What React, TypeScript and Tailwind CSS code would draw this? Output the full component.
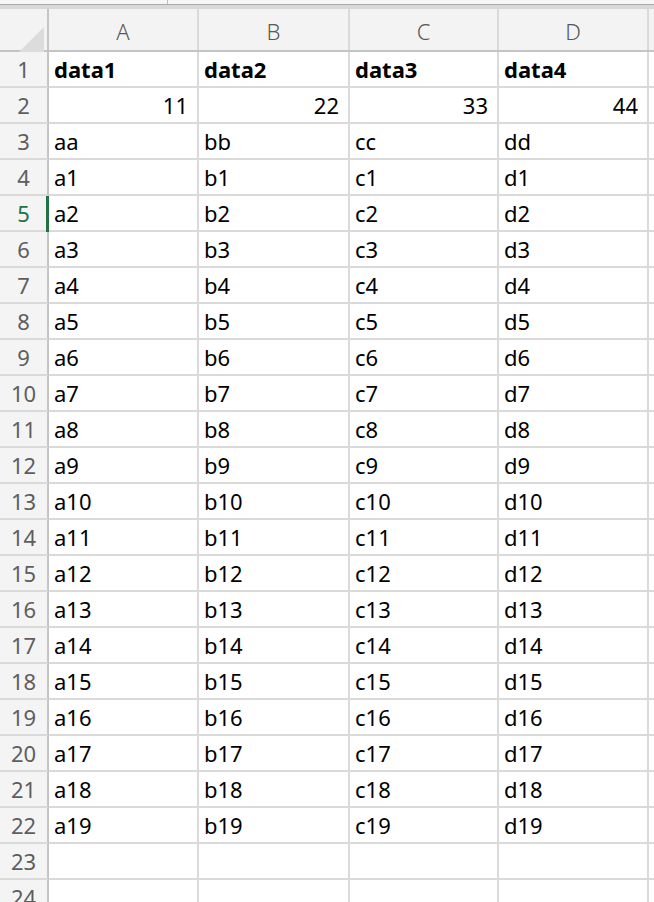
import React from 'react';

type Row = string[];

const columns = ['A', 'B', 'C', 'D'];

const rows: Row[] = [
  ['data1', 'data2', 'data3', 'data4'],
  ['11', '22', '33', '44'],
  ['aa', 'bb', 'cc', 'dd'],
  ...Array.from({ length: 19 }, (_, i) => [`a${i + 1}`, `b${i + 1}`, `c${i + 1}`, `d${i + 1}`]),
  ['', '', '', ''],
  ['', '', '', ''],
];

const font = { fontFamily: '"Noto Sans", "Open Sans", sans-serif' };

const Corner: React.FC = () => (
  <div className="h-full bg-[#f3f3f3] border-r-2 border-[#c4c4c4] relative">
    <svg className="absolute left-[14px] top-[18px]" width="30" height="30" viewBox="0 0 30 30">
      <polygon points="30,0 30,30 0,30" fill="#dcdcdc" />
    </svg>
  </div>
);

const App: React.FC = () => {
  return (
    <div className="w-[654px] h-[902px] overflow-hidden bg-white text-black" style={font}>
      <div className="h-[4px] bg-[#f6f6f6]" />
      <div className="relative h-[1px] bg-[#a9a9a9]">
        <div className="absolute left-[167px] -top-[4px] w-[1px] h-[4px] bg-[#bdbdbd]" />
      </div>
      <div className="h-[4px] bg-[#d8d8d8]" />

      {/* column headers */}
      <div className="grid grid-cols-[49px_150px_151px_149px_150px_1fr] h-[43px] bg-[#f3f3f3] border-b-2 border-[#c4c4c4]">
        <Corner />
        {columns.map((c) => (
          <div
            key={c}
            className="flex items-center justify-center pt-[3px] border-r-2 border-[#dadada] text-[22px] font-light text-[#585858]"
          >
            {c}
          </div>
        ))}
        <div />
      </div>

      {/* rows */}
      {rows.map((row, r) => {
        const selected = r === 4;
        return (
          <div key={r} className="grid grid-cols-[49px_150px_151px_149px_150px_1fr] h-[36px]">
            <div
              className={`relative flex items-center justify-center bg-[#f4f4f4] border-r-2 border-b-2 border-b-[#dadada] text-[22px] ${
                selected ? 'border-r-[#217346] text-[#217346]' : 'border-r-[#c4c4c4] text-[#5e5e5e]'
              }`}
            >
              {selected ? <div className="absolute right-[-2px] top-0 bottom-[-2px] w-[3px] bg-[#217346]" /> : null}
              {r + 1}
            </div>
            {row.map((v, c) => {
              const numeric = /^\d+$/.test(v);
              return (
                <div
                  key={c}
                  className={`flex items-center border-r-2 border-b-2 border-[#dadada] text-[22px] ${
                    numeric ? 'justify-end pr-[9px]' : 'pl-[5px]'
                  } ${r === 0 ? 'font-bold' : ''}`}
                >
                  {v}
                </div>
              );
            })}
            <div className="border-b-2 border-[#dadada]" />
          </div>
        );
      })}
    </div>
  );
};

export default App;
